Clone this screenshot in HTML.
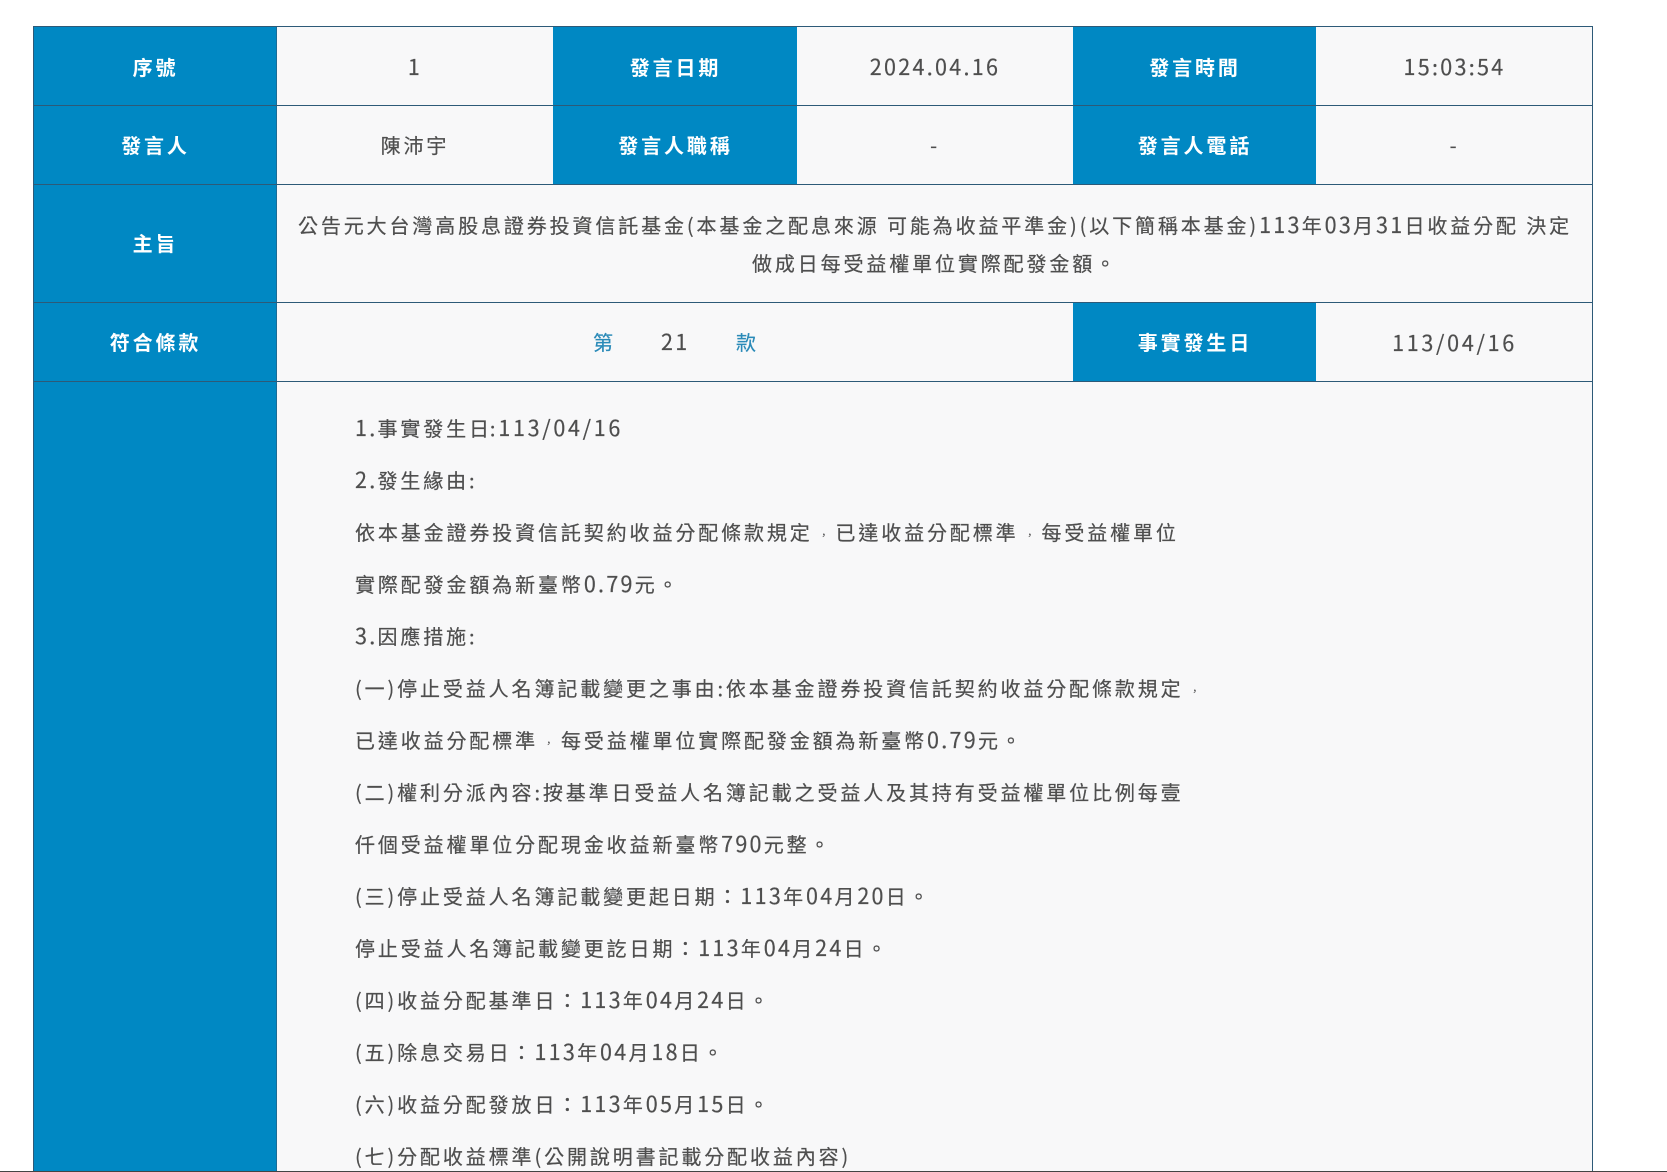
<!DOCTYPE html>
<html lang="zh-TW">
<head>
<meta charset="utf-8">
<title>公告</title>
<style>
html,body{margin:0;padding:0;width:1667px;height:1172px;overflow:hidden;background:#fff}
body{position:relative;font-family:"Noto Sans CJK TC","Liberation Sans",sans-serif;font-size:20px;letter-spacing:2.88px;color:#4e4e4e;-webkit-text-stroke:.2px #4e4e4e}
.b{position:absolute;box-sizing:border-box}
.h{background:#0088c3;color:#fff;font-weight:700;text-align:center;-webkit-text-stroke:0;padding-left:1px}
.c{background:#f8f8f9;text-align:center}
.line{position:absolute;background:#2d5a78}
.l{position:absolute;left:355px;height:52px;line-height:52px;white-space:nowrap}
.s{position:absolute;left:277px;width:1316px;text-align:center;white-space:nowrap;height:40px;line-height:40px}
i{font-style:normal}
i.d{font-size:21.5px;letter-spacing:2.3px}
i.w{letter-spacing:2.7px}
i.t{position:relative;top:1px}
i.k{display:inline-block;line-height:1;transform:scale(.5) translateY(6px)}
</style>
</head>
<body>
<div class="b c" style="left:33px;top:26px;width:1560px;height:1146px"></div>

<div class="b h" style="left:33px;top:26px;width:244px;height:1146px"></div>
<div class="b h" style="left:553px;top:26px;width:244px;height:159px"></div>
<div class="b h" style="left:1073px;top:26px;width:243px;height:159px"></div>
<div class="b h" style="left:1073px;top:302px;width:243px;height:80px"></div>

<div class="b h" style="left:33px;top:27px;width:244px;line-height:80px;background:none">序號</div>
<div class="b c" style="left:277px;top:26px;width:276px;line-height:80px;background:none"><i class="d t">1</i></div>
<div class="b h" style="left:553px;top:27px;width:244px;line-height:80px;background:none">發言日期</div>
<div class="b c" style="left:797px;top:26px;width:276px;line-height:80px;background:none"><i class="d t">2024.04.16</i></div>
<div class="b h" style="left:1073px;top:27px;width:243px;line-height:80px;background:none">發言時間</div>
<div class="b c" style="left:1316px;top:26px;width:277px;line-height:80px;background:none"><i class="d t">15:03:54</i></div>

<div class="b h" style="left:33px;top:105px;width:244px;line-height:80px;background:none">發言人</div>
<div class="b c" style="left:277px;top:105px;width:276px;line-height:80px;background:none">陳沛宇</div>
<div class="b h" style="left:553px;top:105px;width:244px;line-height:80px;background:none">發言人職稱</div>
<div class="b c" style="left:797px;top:105px;width:276px;line-height:80px;background:none">-</div>
<div class="b h" style="left:1073px;top:105px;width:243px;line-height:80px;background:none">發言人電話</div>
<div class="b c" style="left:1316px;top:105px;width:277px;line-height:80px;background:none">-</div>

<div class="b h" style="left:33px;top:184px;width:244px;line-height:118px;background:none">主旨</div>
<div class="s" style="top:205px">公告元大台灣高股息證券投資信託基金(本基金之配息來源 可能為收益平準金)(以下簡稱本基金)<i class="d">113</i>年<i class="d">03</i>月<i class="d">31</i>日收益分配 決定</div>
<div class="s" style="top:243px">做成日每受益權單位實際配發金額。</div>

<div class="b h" style="left:33px;top:302px;width:244px;line-height:80px;background:none">符合條款</div>
<div class="b" style="left:593px;top:302px;line-height:80px;color:#2a8ab8;-webkit-text-stroke:.2px #2a8ab8">第</div>
<div class="b" style="left:661px;top:302px;line-height:80px"><i class="d">21</i></div>
<div class="b" style="left:736px;top:302px;line-height:80px;color:#2a8ab8;-webkit-text-stroke:.2px #2a8ab8">款</div>
<div class="b h" style="left:1073px;top:302px;width:243px;line-height:80px;background:none">事實發生日</div>
<div class="b c" style="left:1316px;top:302px;width:277px;line-height:80px;background:none"><i class="d w t">113/04/16</i></div>

<div class="l" style="top:402px"><i class="d">1.</i>事實發生日<span style="margin-left:-2px">:</span><i class="d w">113/04/16</i></div>
<div class="l" style="top:454px"><i class="d">2.</i>發生緣由:</div>
<div class="l" style="top:506px">依本基金證券投資信託契約收益分配條款規定<i class="k">，</i>已達收益分配標準<i class="k">，</i>每受益權單位</div>
<div class="l" style="top:558px">實際配發金額為新臺幣<i class="d">0.79</i>元。</div>
<div class="l" style="top:610px"><i class="d">3.</i>因應措施:</div>
<div class="l" style="top:662px">(一)停止受益人名簿記載變更之事由:依本基金證券投資信託契約收益分配條款規定<i class="k">，</i></div>
<div class="l" style="top:714px">已達收益分配標準<i class="k">，</i>每受益權單位實際配發金額為新臺幣<i class="d">0.79</i>元。</div>
<div class="l" style="top:766px">(二)權利分派內容:按基準日受益人名簿記載之受益人及其持有受益權單位比例每壹</div>
<div class="l" style="top:818px">仟個受益權單位分配現金收益新臺幣<i class="d">790</i>元整。</div>
<div class="l" style="top:870px">(三)停止受益人名簿記載變更起日期：<i class="d">113</i>年<i class="d">04</i>月<i class="d">20</i>日。</div>
<div class="l" style="top:922px">停止受益人名簿記載變更訖日期：<i class="d">113</i>年<i class="d">04</i>月<i class="d">24</i>日。</div>
<div class="l" style="top:974px">(四)收益分配基準日：<i class="d">113</i>年<i class="d">04</i>月<i class="d">24</i>日。</div>
<div class="l" style="top:1026px">(五)除息交易日：<i class="d">113</i>年<i class="d">04</i>月<i class="d">18</i>日。</div>
<div class="l" style="top:1078px">(六)收益分配發放日：<i class="d">113</i>年<i class="d">05</i>月<i class="d">15</i>日。</div>
<div class="l" style="top:1130px">(七)分配收益標準(公開說明書記載分配收益內容)</div>

<div class="line" style="left:33px;top:26px;width:1560px;height:1px"></div>
<div class="line" style="left:33px;top:105px;width:1560px;height:1px"></div>
<div class="line" style="left:33px;top:184px;width:1560px;height:1px"></div>
<div class="line" style="left:33px;top:302px;width:1560px;height:1px"></div>
<div class="line" style="left:33px;top:381px;width:1560px;height:1px"></div>
<div class="line" style="left:33px;top:26px;width:1px;height:1146px"></div>
<div class="line" style="left:1592px;top:26px;width:1px;height:1146px"></div>
<div class="line" style="left:276px;top:26px;width:1px;height:1146px;opacity:.6"></div>
<div class="line" style="left:0;top:1171px;width:1667px;height:1px;background:#444"></div>
</body>
</html>
